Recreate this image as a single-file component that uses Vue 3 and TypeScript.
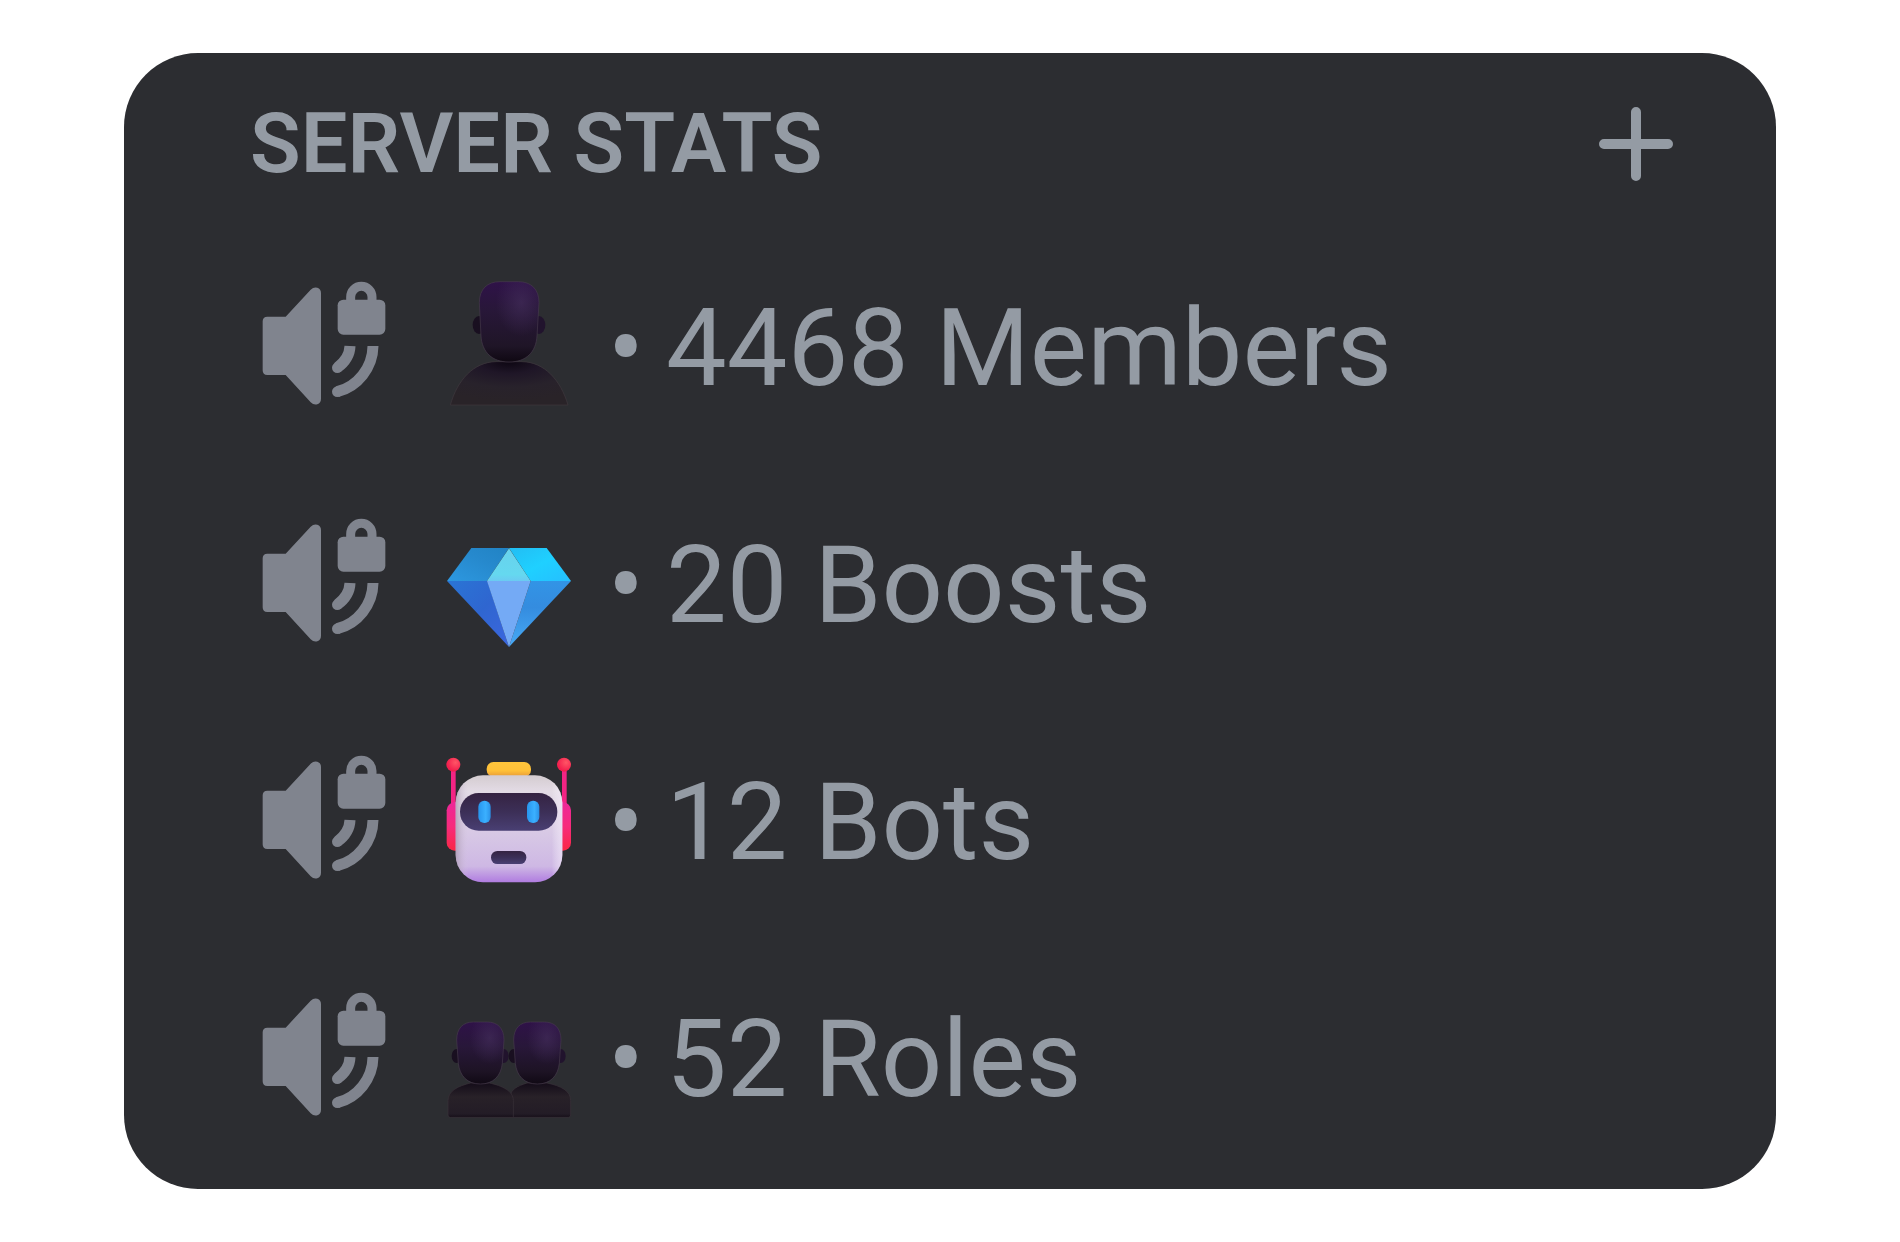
<script setup lang="ts">
type Emoji = 'member' | 'gem' | 'robot' | 'pair'

interface Stat {
  emoji: Emoji
  label: string
}

const stats: Stat[] = [
  { emoji: 'member', label: '4468 Members' },
  { emoji: 'gem', label: '20 Boosts' },
  { emoji: 'robot', label: '12 Bots' },
  { emoji: 'pair', label: '52 Roles' },
]
</script>

<template>
  <main class="page">
    <section class="card" aria-labelledby="stats-title">
      <header class="header">
        <h1 id="stats-title" class="title">SERVER STATS</h1>
        <button class="add" type="button" aria-label="Create channel">
          <svg viewBox="0 0 74 74" aria-hidden="true">
            <path d="M37 5V69M5 37H69" stroke="currentColor" stroke-width="10" stroke-linecap="round" />
          </svg>
        </button>
      </header>

      <ul class="list">
        <li v-for="stat in stats" :key="stat.label" class="row">
          <svg class="icon" viewBox="60 72 384 384" aria-hidden="true">
            <path
              fill="currentColor"
              d="M68 184Q68 170 82 170H137L212 89Q221 80 232 83Q243 87 243 99V416Q243 429 232 433Q221 436 212 427L137 345H82Q68 345 68 331Z"
            />
            <rect x="293" y="119" width="143" height="105" rx="17" fill="currentColor" />
            <g fill="none" stroke="currentColor">
              <path d="M332 124V111A32 32 0 0 1 396 111V124" stroke-width="27" />
              <path d="M330 258C329 286 315 306 292 323" stroke-width="33" />
              <path d="M399 258C398 323 353 380 292 395" stroke-width="33" />
            </g>
            <circle cx="292" cy="323" r="16" fill="currentColor" />
            <circle cx="292" cy="395" r="16" fill="currentColor" />
          </svg>

          <svg v-if="stat.emoji === 'member'" class="emoji" viewBox="612 72 384 384" aria-hidden="true">
            <defs>
              <linearGradient id="m-head" x1="0" y1="0" x2="0" y2="1">
                <stop offset="0" stop-color="#2f1248" />
                <stop offset=".35" stop-color="#281739" />
                <stop offset=".8" stop-color="#1f1527" />
                <stop offset="1" stop-color="#0f0812" />
              </linearGradient>
              <radialGradient id="m-shine" cx=".7" cy=".26" r=".42">
                <stop offset="0" stop-color="#46305e" stop-opacity=".6" />
                <stop offset="1" stop-color="#46305e" stop-opacity="0" />
              </radialGradient>
              <radialGradient id="m-body" cx=".5" cy="0" r=".9">
                <stop offset="0" stop-color="#0d0612" />
                <stop offset=".3" stop-color="#1f1627" />
                <stop offset=".65" stop-color="#28222b" />
                <stop offset="1" stop-color="#292328" />
              </radialGradient>
            </defs>
            <path d="M631 435C652 360 701 306 768 305H846C913 306 962 360 984 435Z" fill="url(#m-body)" stroke="#3f383e" stroke-width="2" />
            <ellipse cx="717" cy="195" rx="19" ry="27" fill="#190f20" />
            <ellipse cx="897" cy="195" rx="19" ry="27" fill="#21132d" />
            <path
              d="M718 128C718 87 742 65 780 65H835C874 65 897 88 897 128L891 228C888 276 859 306 807 306C756 306 726 276 723 228Z"
              fill="url(#m-head)" stroke="#453a4b" stroke-width="2"
            />
            <path
              d="M718 128C718 87 742 65 780 65H835C874 65 897 88 897 128L891 228C888 276 859 306 807 306C756 306 726 276 723 228Z"
              fill="url(#m-shine)"
            />
          </svg>

          <svg v-else-if="stat.emoji === 'gem'" class="emoji" viewBox="612 33 384 384" aria-hidden="true">
            <defs>
              <linearGradient id="g-tl" x1="0" y1="1" x2="1" y2="0">
                <stop offset="0" stop-color="#2d98e0" />
                <stop offset=".6" stop-color="#2689cd" />
                <stop offset="1" stop-color="#2183c4" />
              </linearGradient>
              <linearGradient id="g-tr" x1="0" y1="0" x2="1" y2="1">
                <stop offset="0" stop-color="#22bdf3" />
                <stop offset=".5" stop-color="#1fd0ff" />
                <stop offset="1" stop-color="#25bfff" />
              </linearGradient>
              <linearGradient id="g-tc" x1="0" y1="0" x2="0" y2="1">
                <stop offset="0" stop-color="#68d2ed" />
                <stop offset=".8" stop-color="#65d8ef" />
                <stop offset="1" stop-color="#6bcaf2" />
              </linearGradient>
              <linearGradient id="g-bl" x1="0" y1="0" x2="1" y2="1">
                <stop offset="0" stop-color="#2a75d5" />
                <stop offset=".5" stop-color="#2f66d0" />
                <stop offset="1" stop-color="#3c66df" />
              </linearGradient>
              <linearGradient id="g-br" x1="0" y1="0" x2="0" y2="1">
                <stop offset="0" stop-color="#3294e6" />
                <stop offset=".4" stop-color="#348cdf" />
                <stop offset="1" stop-color="#48aaf5" />
              </linearGradient>
            </defs>
            <path d="M694 114H807L741 213H621Z" fill="url(#g-tl)" />
            <path d="M807 114H920L993 213H872Z" fill="url(#g-tr)" />
            <path d="M621 213H742L807 411Z" fill="url(#g-bl)" />
            <path d="M872 213H993L807 411Z" fill="url(#g-br)" />
            <path d="M807 115L872 213H741Z" fill="url(#g-tc)" />
            <path d="M741 213H872L807 411Z" fill="#74aaf5" />
          </svg>

          <svg v-else-if="stat.emoji === 'robot'" class="emoji" viewBox="612 54 384 384" aria-hidden="true">
            <defs>
              <linearGradient id="r-face" x1="0" y1="0" x2="0" y2="1">
                <stop offset="0" stop-color="#d4ccd0" />
                <stop offset=".15" stop-color="#e3dbe5" />
                <stop offset=".55" stop-color="#d7c8e5" />
                <stop offset=".85" stop-color="#ceb8e4" />
                <stop offset="1" stop-color="#b07ce0" />
              </linearGradient>
              <linearGradient id="r-edge" x1="0" y1="0" x2="1" y2="0">
                <stop offset="0" stop-color="#a291a6" stop-opacity=".65" />
                <stop offset=".12" stop-color="#d8cbe2" stop-opacity="0" />
                <stop offset=".9" stop-color="#fff" stop-opacity="0" />
                <stop offset="1" stop-color="#f4eafa" stop-opacity=".6" />
              </linearGradient>
              <linearGradient id="r-visor" x1="0" y1="0" x2="0" y2="1">
                <stop offset="0" stop-color="#352342" />
                <stop offset=".5" stop-color="#3c2f57" />
                <stop offset="1" stop-color="#493f73" />
              </linearGradient>
              <linearGradient id="r-ear" x1="0" y1="0" x2="0" y2="1">
                <stop offset="0" stop-color="#ed2799" />
                <stop offset=".5" stop-color="#f72b7c" />
                <stop offset="1" stop-color="#fa2845" />
              </linearGradient>
              <radialGradient id="r-ball" cx=".65" cy=".35" r=".6">
                <stop offset="0" stop-color="#ff5565" />
                <stop offset="1" stop-color="#f31f4e" />
              </radialGradient>
              <linearGradient id="r-eye" x1="0" y1="0" x2="1" y2="0">
                <stop offset="0" stop-color="#2795ed" />
                <stop offset=".6" stop-color="#3bb0ff" />
                <stop offset="1" stop-color="#2a91e6" />
              </linearGradient>
              <linearGradient id="r-cap" x1="0" y1="0" x2="0" y2="1">
                <stop offset="0" stop-color="#ffc53c" />
                <stop offset=".6" stop-color="#ffc038" />
                <stop offset="1" stop-color="#e79a38" />
              </linearGradient>
            </defs>
            <rect x="633" y="80" width="14" height="125" fill="#f32484" />
            <rect x="966" y="80" width="14" height="125" fill="#f32484" />
            <circle cx="640" cy="74" r="21" fill="url(#r-ball)" />
            <circle cx="972" cy="74" r="21" fill="url(#r-ball)" />
            <rect x="620" y="187" width="60" height="145" rx="24" fill="url(#r-ear)" />
            <rect x="933" y="187" width="60" height="145" rx="24" fill="url(#r-ear)" />
            <rect x="740" y="66" width="133" height="44" rx="20" fill="url(#r-cap)" />
            <rect x="647" y="106" width="320" height="321" rx="82" fill="url(#r-face)" />
            <rect x="647" y="106" width="320" height="321" rx="82" fill="url(#r-edge)" />
            <rect x="660" y="159" width="292" height="113" rx="56" fill="url(#r-visor)" />
            <rect x="715" y="182" width="37" height="67" rx="18" fill="url(#r-eye)" />
            <rect x="861" y="182" width="37" height="67" rx="18" fill="url(#r-eye)" />
            <rect x="753" y="333" width="106" height="39" rx="19" fill="url(#r-visor)" />
          </svg>

          <svg v-else class="emoji" viewBox="612 45 384 384" aria-hidden="true">
            <defs>
              <linearGradient id="p-head" x1="0" y1="0" x2="0" y2="1">
                <stop offset="0" stop-color="#2f1248" />
                <stop offset=".4" stop-color="#281739" />
                <stop offset=".8" stop-color="#1d1324" />
                <stop offset="1" stop-color="#100914" />
              </linearGradient>
              <radialGradient id="p-shine" cx=".7" cy=".26" r=".42">
                <stop offset="0" stop-color="#46305e" stop-opacity=".6" />
                <stop offset="1" stop-color="#46305e" stop-opacity="0" />
              </radialGradient>
              <linearGradient id="p-body" x1="0" y1="0" x2="0" y2="1">
                <stop offset="0" stop-color="#140c19" />
                <stop offset=".4" stop-color="#282128" />
                <stop offset=".9" stop-color="#231c26" />
                <stop offset="1" stop-color="#150e18" />
              </linearGradient>
            </defs>
            <path
              d="M811 412V350C811 328 833 318 861 309H921C963 318 992 332 992 362V405Q992 412 985 412Z"
              fill="url(#p-body)" stroke="#39323a" stroke-width="2"
            />
            <path
              d="M624 405V362C624 332 655 318 692 309H748C787 318 820 332 820 362V412H631Q624 412 624 405Z"
              fill="url(#p-body)" stroke="#39323a" stroke-width="2"
            />
            <g v-for="dx in [0, 171]" :key="dx" :transform="`translate(${dx} 0)`">
              <ellipse cx="650" cy="228" rx="15" ry="21" fill="#190f20" />
              <ellipse cx="791" cy="228" rx="15" ry="21" fill="#21132d" />
              <path
                d="M650 180C650 144 670 126 700 126H742C772 126 792 144 792 180L787 250C783 288 760 312 721 312C682 312 659 288 655 250Z"
                fill="url(#p-head)" stroke="#453a4b" stroke-width="2"
              />
              <path
                d="M650 180C650 144 670 126 700 126H742C772 126 792 144 792 180L787 250C783 288 760 312 721 312C682 312 659 288 655 250Z"
                fill="url(#p-shine)"
              />
            </g>
          </svg>

          <span class="dot">•</span>
          <span class="label">{{ stat.label }}</span>
        </li>
      </ul>
    </section>
  </main>
</template>

<style>
body {
  margin: 0;
  background: #fff;
}
</style>

<style scoped>
.page {
  padding: 53px 124px;
  font-family: Roboto, "Liberation Sans", sans-serif;
  color: #949ba4;
}

.card {
  padding: 51px 103px 66px 126px;
  border-radius: 74px;
  background: #2c2d31;
}

.header {
  display: flex;
  align-items: center;
  justify-content: space-between;
  height: 80px;
}

.title {
  margin: 0;
  font-size: 83px;
  line-height: 80px;
  font-weight: 600;
}

.add {
  padding: 0;
  border: 0;
  background: none;
  color: inherit;
  line-height: 0;
  cursor: pointer;
}

.add svg {
  width: 74px;
  height: 74px;
}

.list {
  display: flex;
  flex-direction: column;
  gap: 109px;
  margin: 100px 0 0;
  padding: 0 0 0 10px;
  list-style: none;
}

.row {
  display: flex;
  align-items: center;
  height: 128px;
}

.icon,
.emoji {
  flex: none;
  width: 128px;
  height: 128px;
  overflow: visible;
}

.icon {
  margin-right: 56px;
  color: #80848e;
}

.dot {
  width: 64px;
  margin: 0 8px 0 22px;
  text-align: center;
}

.dot,
.label {
  font-size: 108px;
  line-height: 128px;
  font-weight: 450;
  white-space: nowrap;
}
</style>
